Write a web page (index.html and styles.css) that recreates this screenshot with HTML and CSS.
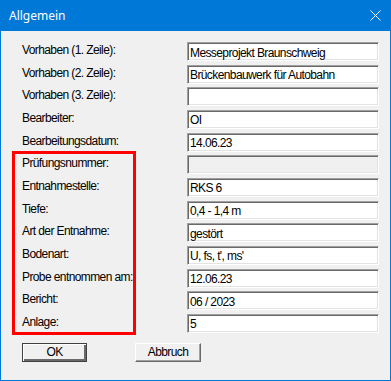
FILE: index.html
```html
<!doctype html>
<html lang="de">
    <head>
        <meta charset="UTF-8" />
        <title>Allgemein</title>
        <link rel="stylesheet" href="styles.css">
    </head>
    <body>
        <div class="window">
            <div class="titlebar">
                <span class="title">Allgemein</span>
                <svg class="close" width="11" height="11" viewBox="0 0 11 11">
                    <path d="M0.5 0.5 L10.5 10.5 M10.5 0.5 L0.5 10.5" stroke="#fff" stroke-width="1" fill="none" />
                </svg>
            </div>

            <div class="content">
                <div class="form">
                    <label>Vorhaben (1. Zeile):</label>
                    <input type="text" value="Messeprojekt Braunschweig" />
                    <label>Vorhaben (2. Zeile):</label>
                    <input type="text" value="Brückenbauwerk für Autobahn" />
                    <label>Vorhaben (3. Zeile):</label>
                    <input type="text" value="" />
                    <label>Bearbeiter:</label>
                    <input type="text" value="OI" />
                    <label>Bearbeitungsdatum:</label>
                    <input type="text" value="14.06.23" />
                </div>

                <!-- marked block -->
                <div class="form marked">
                    <label>Prüfungsnummer:</label>
                    <input type="text" value="" disabled />
                    <label>Entnahmestelle:</label>
                    <input type="text" value="RKS 6" />
                    <label>Tiefe:</label>
                    <input type="text" value="0,4 - 1,4 m" />
                    <label>Art der Entnahme:</label>
                    <input type="text" value="gestört" />
                    <label>Bodenart:</label>
                    <input type="text" value="U, fs, t', ms'" />
                    <label>Probe entnommen am:</label>
                    <input type="text" value="12.06.23" />
                    <label>Bericht:</label>
                    <input type="text" value="06 / 2023" />
                    <label>Anlage:</label>
                    <input type="text" value="5" />
                </div>

                <div class="buttons">
                    <button class="default">OK</button>
                    <button>Abbruch</button>
                </div>
            </div>
        </div>
    </body>
</html>
```

FILE: styles.css
```css
body {
    margin: 0;
    font-family: "Liberation Sans", Arial, sans-serif;
    font-size: 12px;
    letter-spacing: -0.6px;
    color: #000;
}
.window {
    width: 391px;
    height: 381px;
    box-sizing: border-box;
    border: 1px solid #0078d7;
    border-top: none;
    background-color: #f0f0f0;
}
.titlebar {
    height: 31px;
    margin: 0 -1px;
    background-color: #0078d7;
    display: flex;
    align-items: center;
    justify-content: space-between;
    padding: 0 10px 0 9px;
}
.title {
    font-family: "Noto Sans", "Open Sans", sans-serif;
    font-size: 12px;
    letter-spacing: 0;
    color: #fff;
}
.close {
    display: block;
}
.content {
    padding: 11px 0 0 21px;
}
.form {
    display: grid;
    grid-template-columns: 165px 192px;
    grid-auto-rows: 22.67px;
}
.marked {
    position: relative;
}
.marked::before {
    content: "";
    position: absolute;
    left: -10px;
    top: -4px;
    bottom: 2px;
    width: 124px;
    box-sizing: border-box;
    border: 3px solid #ff0000;
    pointer-events: none;
}
label {
    line-height: 16px;
    height: 19px;
}
input[type="text"] {
    height: 19px;
    box-sizing: border-box;
    margin: 0;
    padding: 2px 2px 0 2px;
    font: inherit;
    letter-spacing: inherit;
    color: #000;
    background-color: #fff;
    border: 1px solid;
    border-color: #a0a0a0 #fff #fff #a0a0a0;
    box-shadow: inset 1px 1px 0 #696969, inset -1px -1px 0 #e3e3e3;
    outline: none;
}
input[type="text"]:disabled {
    background-color: #f0f0f0;
}
.buttons {
    display: flex;
    gap: 48px;
    margin-top: 6px;
}
button {
    width: 66px;
    height: 19px;
    box-sizing: border-box;
    margin: 0;
    padding: 0;
    font: inherit;
    letter-spacing: inherit;
    color: #000;
    background-color: #f0f0f0;
    border: 1px solid;
    border-color: #fff #696969 #696969 #fff;
    box-shadow: inset -1px -1px 0 #a0a0a0;
}
button.default {
    width: 65px;
    border: 1px solid #404040;
    box-shadow: inset 1px 1px 0 #fff, inset -2px -2px 0 #696969, inset -1px -1px 0 #a0a0a0;
}
```
